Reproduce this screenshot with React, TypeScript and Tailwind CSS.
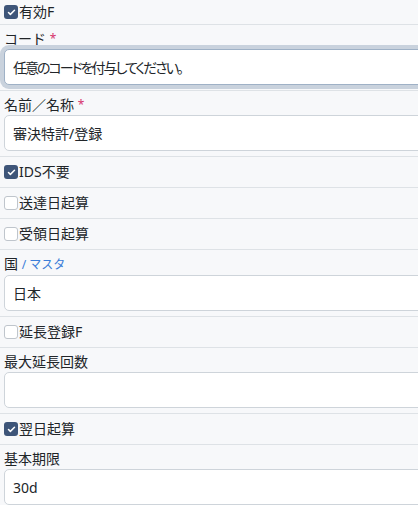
import { Check } from "lucide-react";

interface CheckRowProps {
  label: string;
  checked?: boolean;
  first?: boolean;
}

function CheckRow({ label, checked, first }: CheckRowProps) {
  return (
    <div
      className={
        "flex items-center pl-[4px] border-b border-[#dee2e6] " +
        (first ? "h-[25px]" : "h-[31px]")
      }
    >
      {checked ? (
        <span className="flex items-center justify-center w-[14px] h-[14px] rounded-[3px] bg-[#3e5579]">
          <Check size={9} strokeWidth={4} className="text-white" />
        </span>
      ) : (
        <span className="w-[14px] h-[14px] rounded-[3px] bg-white border border-[#bfc5cc]" />
      )}
      <span className="ml-[1px] text-[14px] leading-[20px] text-[#212529]">{label}</span>
    </div>
  );
}

interface FieldRowProps {
  label: React.ReactNode;
  value?: React.ReactNode;
  focused?: boolean;
}

function FieldRow({ label, value, focused }: FieldRowProps) {
  return (
    <div className="pl-[4px] pt-[4px] pb-[5px] border-b border-[#dee2e6]">
      <div className="text-[14px] leading-[20px] text-[#212529]">{label}</div>
      <div
        className={
          "w-[440px] h-[36px] flex items-center pl-[8px] bg-white rounded-[5px] border text-[14px] text-[#212529] " +
          (focused
            ? "border-[#9fb1c6] shadow-[0_0_0_4px_#c9d2dd]"
            : "border-[#ced4da]")
        }
      >
        {value}
      </div>
    </div>
  );
}

export default function App() {
  return (
    <div className="w-[418px] h-[505px] overflow-hidden bg-[#f7f8fa] font-['Noto_Sans','Noto_Sans_CJK_JP',sans-serif]">
      <CheckRow label="有効F" checked first />
      <FieldRow
        label={
          <>
            コード <span className="text-[12px] align-top text-[#d6336c]">*</span>
          </>
        }
        value={
          <span className="[font-feature-settings:'palt'] tracking-[-2px]">
            任意のコードを付与してください。
          </span>
        }
        focused
      />
      <FieldRow
        label={
          <>
            名前／名称 <span className="text-[12px] align-top text-[#d6336c]">*</span>
          </>
        }
        value="審決特許/登録"
      />
      <CheckRow label="IDS不要" checked />
      <CheckRow label="送達日起算" />
      <CheckRow label="受領日起算" />
      <FieldRow
        label={
          <>
            国 <span className="text-[12px] text-[#3b7dd8]">/ マスタ</span>
          </>
        }
        value="日本"
      />
      <CheckRow label="延長登録F" />
      <FieldRow label="最大延長回数" value="" />
      <CheckRow label="翌日起算" checked />
      <FieldRow label="基本期限" value="30d" />
    </div>
  );
}
